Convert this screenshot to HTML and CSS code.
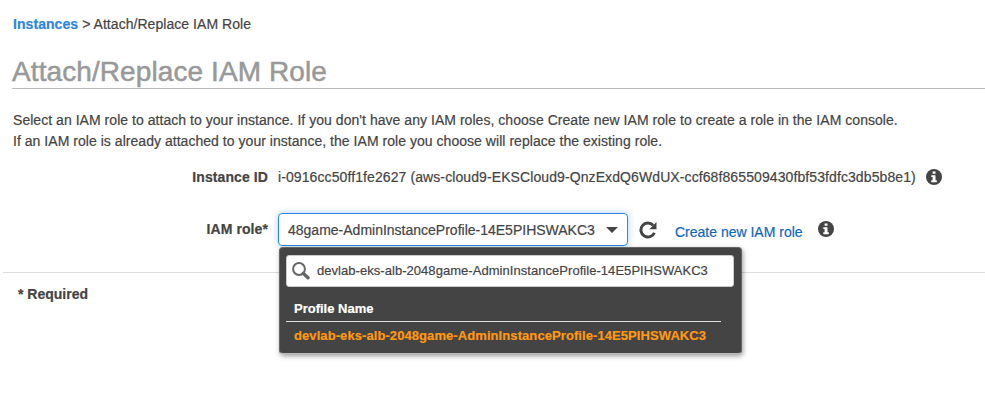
FILE: index.html
```html
<!DOCTYPE html>
<html lang="en">
<head>
<meta charset="utf-8">
<title>Attach/Replace IAM Role</title>
<link rel="stylesheet" href="styles.css">
</head>
<body>
<svg class="sprite" width="0" height="0" aria-hidden="true">
  <symbol id="info" viewBox="0 0 16 16">
    <circle cx="8" cy="8" r="8" fill="#444"/>
    <path d="M6.6 2.6h2.9v2.2H6.6zM5.3 6.2h4.2v5.1h1.3v1.9H5.3v-1.9h1.3V8H5.3z" fill="#fff"/>
  </symbol>
</svg>
<nav class="breadcrumb"><a class="crumb-link" href="#">Instances</a><span class="crumb-current">&gt; Attach/Replace IAM Role</span></nav>
<h1 class="title"><span class="title-text">Attach/Replace IAM Role</span></h1>
<p class="intro"><span class="intro-a">Select an IAM role to attach to your instance. If you don't have any IAM roles, choose Create new IAM role to create a role in the IAM console.</span><br><span class="intro-b">If an IAM role is already attached to your instance, the IAM role you choose will replace the existing role.</span></p>
<div class="row row-instance">
  <span class="label label-instance">Instance ID</span>
  <span class="instance-id">i-0916cc50ff1fe2627 (aws-cloud9-EKSCloud9-QnzExdQ6WdUX-ccf68f865509430fbf53fdfc3db5b8e1)</span>
  <svg class="info"><use href="#info"/></svg>
</div>
<div class="row row-role">
  <span class="label label-role">IAM role*</span>
  <div class="select">
    <span class="select-value">48game-AdminInstanceProfile-14E5PIHSWAKC3</span>
    <span class="caret"></span>
    <div class="menu">
      <div class="search">
        <svg class="glass" viewBox="0 0 18 18"><circle cx="7" cy="7" r="5.9" fill="none" stroke="#666" stroke-width="2"/><path d="M11.4 11.4l4.6 4.4" stroke="#666" stroke-width="3.4" stroke-linecap="round"/></svg>
        <span class="search-text">devlab-eks-alb-2048game-AdminInstanceProfile-14E5PIHSWAKC3</span>
      </div>
      <div class="menu-head"><span class="menu-head-text">Profile Name</span></div>
      <div class="menu-item"><span class="menu-item-text">devlab-eks-alb-2048game-AdminInstanceProfile-14E5PIHSWAKC3</span></div>
    </div>
  </div>
  <svg class="refresh" viewBox="0 0 18 18"><path d="M14.1 4.3A7 7 0 1 0 15.4 11.7" fill="none" stroke="#444" stroke-width="3"/><path d="M17.5 1v7.2h-7.2z" fill="#444"/></svg>
  <a class="create" href="#">Create new IAM role</a>
  <svg class="info"><use href="#info"/></svg>
</div>
<div class="required"><span class="required-text">* Required</span></div>
</body>
</html>
```
FILE: styles.css
```css
* { box-sizing: border-box; }
body {
  margin: 0;
  height: 402px;
  overflow: hidden;
  background: #fff;
  color: #444;
  font: 14px/20px "Liberation Sans", Arial, sans-serif;
  white-space: nowrap;
  -webkit-text-stroke: 0.2px currentColor;
}
a { text-decoration: none; }
svg { display: block; flex: none; }
.sprite { position: absolute; }
.breadcrumb { display: flex; gap: 4px; padding: 14px 0 0 13px; }
.crumb-link { color: #2e86de; font-weight: bold; letter-spacing: .06px; }
.crumb-current { letter-spacing: .05px; }
.title {
  margin: 20px 0 0 12px;
  height: 35px;
  border-bottom: 1px solid #bbb;
  color: #999;
  font-size: 28px;
  font-weight: normal;
  line-height: 36px;
  letter-spacing: .09px;
  -webkit-text-stroke: 0.5px #999;
}
.intro { margin: 21px 0 0 13px; line-height: 21px; }
.intro-a { letter-spacing: .041px; }
.intro-b { letter-spacing: .037px; }
.row { display: flex; align-items: center; }
.row-instance { margin-top: 14px; height: 21px; }
.row-role { margin-top: 26px; height: 33px; }
.label { width: 268px; margin-right: 10px; font-weight: bold; display: flex; justify-content: flex-end; letter-spacing: .09px; }
.label-role { margin-bottom: 1px; }
.instance-id { letter-spacing: .096px; }
.row-instance .info { margin-left: 10px; }
.info { width: 16px; height: 16px; }
.select {
  position: relative;
  width: 350px;
  height: 33px;
  border: 1px solid #2e86de;
  border-radius: 4px;
  box-shadow: 0 0 7px rgba(46, 134, 222, .4);
  display: flex;
  align-items: center;
  padding: 1px 9px 0;
  justify-content: space-between;
}
.caret { border: 6px solid transparent; border-top: 6px solid #444; border-bottom: 0; }
.menu {
  position: absolute;
  left: 0;
  top: 33px;
  width: 463px;
  height: 107px;
  background: #444;
  border: 1px solid #666;
  border-bottom-color: #bbb;
  border-radius: 4px;
  box-shadow: 1px 2px 5px rgba(0, 0, 0, .4);
  padding: 7px 6px;
}
.search {
  width: 448px;
  height: 32px;
  background: #fff;
  border: 1px solid #ccc;
  border-radius: 3px;
  display: flex;
  align-items: center;
  padding-left: 5px;
}
.glass { width: 18px; height: 18px; }
.search-text { margin-left: 7px; font-size: 13px; letter-spacing: .045px; }
.menu-head {
  margin-top: 9px;
  width: 435px;
  height: 26px;
  padding: 3px 8px 0;
  border-bottom: 1px solid #ddd;
  color: #fff;
  font-size: 13px;
  font-weight: bold;
}
.menu-item { padding: 4px 8px; color: #ff9914; font-size: 13px; font-weight: bold; letter-spacing: .08px; }
.refresh { width: 18px; height: 18px; margin-left: 11px; }
.create { color: #1166bb; margin: 4px 0 0 18px; }
.row-role .info { margin: 0 0 1px 15px; }
.required { margin: 26px 0 0 3px; border-top: 1px solid #ddd; padding: 11px 0 0 15px; font-weight: bold; }
```
